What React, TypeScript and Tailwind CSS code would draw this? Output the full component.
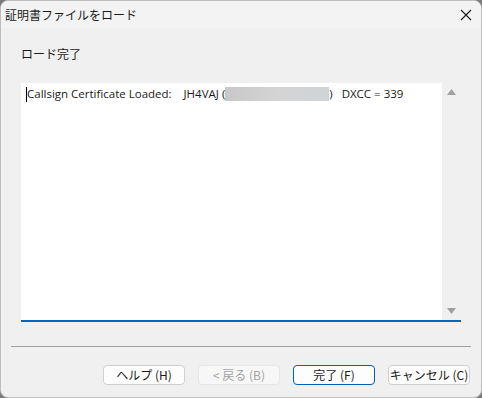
import React from "react";

const jp = { fontFamily: '"Noto Sans CJK JP", "Noto Sans", sans-serif' };
const latin = { fontFamily: '"Open Sans", "Noto Sans CJK JP", sans-serif' };

function DialogButton({
  label,
  disabled,
  focused,
}: {
  label: string;
  disabled?: boolean;
  focused?: boolean;
}) {
  let cls = "border-[#d0d0d0] bg-[#fdfdfd] text-[#1a1a1a]";
  if (disabled) cls = "border-[#e6e6e6] bg-[#f7f7f7] text-[#a3a3a3]";
  if (focused) cls = "border-[#005fb8] bg-[#fdfdfd] text-[#1a1a1a]";
  return (
    <button
      className={`w-[82px] h-[20px] rounded-[4px] border text-[12px] leading-none flex items-center justify-center ${cls}`}
      style={jp}
    >
      {label}
    </button>
  );
}

export default function App() {
  return (
    <div className="w-[482px] h-[398px] bg-[#7a7a7a] overflow-hidden">
      <div className="w-[482px] h-[398px] rounded-[8px] border border-[#bdbdbd] bg-[#f0f0f0] flex flex-col overflow-hidden">
        {/* title bar */}
        <div className="h-[27px] bg-[#f3f3f3] flex items-center justify-between pl-[4px] pr-[9px]">
          <span className="text-[12px] text-[#1a1a1a]" style={jp}>
            証明書ファイルをロード
          </span>
          <svg width="12" height="12" viewBox="0 0 12 12" className="text-[#1a1a1a]">
            <path d="M1 1 L11 11 M11 1 L1 11" stroke="currentColor" strokeWidth="1.1" fill="none" />
          </svg>
        </div>

        {/* body */}
        <div className="flex-1 flex flex-col px-[20px]">
          <div className="h-[55px] pt-[17px] text-[12px] text-[#1a1a1a]" style={jp}>
            ロード完了
          </div>

          <div className="h-[239px] w-[440px] bg-white border-b-2 border-[#0067c0] flex">
            <div className="flex-1 pl-[5px] pt-[3px]">
              <div className="flex items-center text-[11.5px] text-[#1a1a1a] whitespace-pre h-[16px]" style={latin}>
                <span className="w-px h-[15px] bg-black" />
                <span>Callsign Certificate Loaded:    JH4VAJ (</span>
                <span className="inline-block w-[104px] h-[14px] bg-gradient-to-r from-[#c8c8c8] via-[#d4d4d4] to-[#cfd4d8]" />
                <span>)   DXCC = 339</span>
              </div>
            </div>
            <div className="w-[19px] bg-[#f0f0f0] flex flex-col items-center justify-between pt-[6px] pb-[6px]">
              <svg width="9" height="6" viewBox="0 0 9 6">
                <path d="M0 6 L4.5 0 L9 6 Z" fill="#a0a0a0" />
              </svg>
              <svg width="9" height="6" viewBox="0 0 9 6">
                <path d="M0 0 L9 0 L4.5 6 Z" fill="#a0a0a0" />
              </svg>
            </div>
          </div>
        </div>

        {/* footer */}
        <div className="px-[10px]">
          <div className="h-px bg-[#a0a0a0]" />
        </div>
        <div className="h-[50px] flex items-start justify-end gap-[13px] pt-[18px] pr-[11px]">
          <DialogButton label="ヘルプ (H)" />
          <DialogButton label="< 戻る (B)" disabled />
          <DialogButton label="完了 (F)" focused />
          <DialogButton label="キャンセル (C)" />
        </div>
      </div>
    </div>
  );
}
